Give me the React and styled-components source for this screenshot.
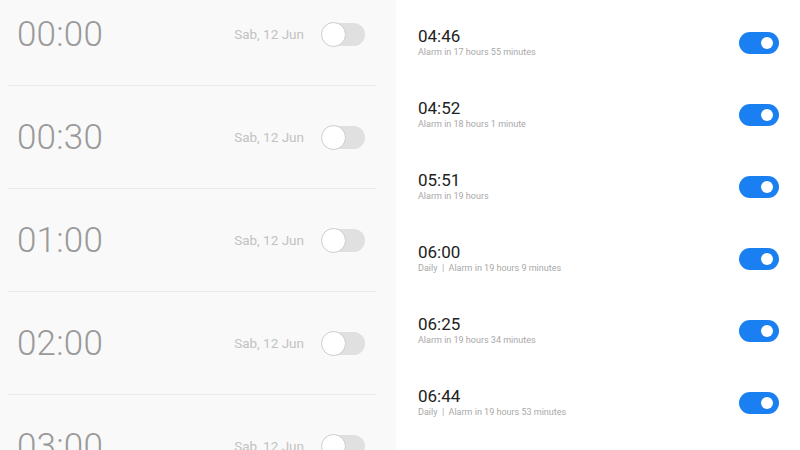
import React from 'react'
import styled, { createGlobalStyle } from "styled-components";

const GlobalStyle = createGlobalStyle`
    html, body { margin: 0; padding: 0; }
    body {
        width: 800px;
        height: 450px;
        overflow: hidden;
        font-family: Roboto, "Noto Sans", sans-serif;
    }
`;

const Page = styled.div`
    width: 800px;
    height: 450px;
    display: grid;
    grid-template-columns: 396px 404px;
    overflow: hidden;
`;

const LeftPanel = styled.div`
    background: #f9f9f9;
    overflow: hidden;
`;

const LeftList = styled.div`
    margin-top: -17px;
    padding: 0 20px 0 8px;
`;

const LeftRow = styled.div`
    height: 102px;
    display: flex;
    align-items: center;
    padding: 0 11px 0 9px;
    border-bottom: 1px solid #ebebeb;
`;

const BigTime = styled.div`
    flex: 1;
    font-size: 35px;
    font-weight: 300;
    color: #9a9a9a;
    letter-spacing: 0.2px;
`;

const DateText = styled.div`
    font-size: 13.5px;
    color: #c2c2c2;
    margin-right: 18px;
`;

const OffSwitch = styled.div`
    width: 43px;
    height: 23px;
    border-radius: 12px;
    background: #e0e0e0;
    position: relative;
    &::after {
        content: "";
        position: absolute;
        left: -1px;
        top: -1px;
        width: 23px;
        height: 23px;
        border-radius: 50%;
        background: #fff;
        border: 1px solid #cdcdcd;
    }
`;

const RightPanel = styled.div`
    background: #fff;
    padding: 7px 21px 0 22px;
`;

const RightRow = styled.div`
    height: 72px;
    display: flex;
    align-items: center;
`;

const Info = styled.div`
    flex: 1;
    display: flex;
    flex-direction: column;
    margin-top: -2px;
`;

const SmallTime = styled.div`
    font-size: 17px;
    color: #222;
    line-height: 20px;
`;

const Sub = styled.div`
    font-size: 9px;
    color: #a8a8a8;
    line-height: 12px;
    white-space: pre;
`;

const OnSwitch = styled.div`
    width: 40px;
    height: 22px;
    border-radius: 11px;
    background: #1a7ff0;
    position: relative;
    &::after {
        content: "";
        position: absolute;
        right: 6px;
        top: 5px;
        width: 12px;
        height: 12px;
        border-radius: 50%;
        background: #fff;
    }
`;

const leftAlarms = ["00:00", "00:30", "01:00", "02:00", "03:00"];

const rightAlarms = [
    { time: "04:46", sub: "Alarm in 17 hours 55 minutes" },
    { time: "04:52", sub: "Alarm in 18 hours 1 minute" },
    { time: "05:51", sub: "Alarm in 19 hours" },
    { time: "06:00", sub: "Daily  |  Alarm in 19 hours 9 minutes" },
    { time: "06:25", sub: "Alarm in 19 hours 34 minutes" },
    { time: "06:44", sub: "Daily  |  Alarm in 19 hours 53 minutes" },
];

const App = () => {
    return (
        <Page>
            <GlobalStyle />
            <LeftPanel>
                <LeftList>
                    {leftAlarms.map((t) => (
                        <LeftRow key={t}>
                            <BigTime>{t}</BigTime>
                            <DateText>Sab, 12 Jun</DateText>
                            <OffSwitch />
                        </LeftRow>
                    ))}
                </LeftList>
            </LeftPanel>
            <RightPanel>
                {rightAlarms.map((a) => (
                    <RightRow key={a.time}>
                        <Info>
                            <SmallTime>{a.time}</SmallTime>
                            <Sub>{a.sub}</Sub>
                        </Info>
                        <OnSwitch />
                    </RightRow>
                ))}
            </RightPanel>
        </Page>
    );
};

export default App
